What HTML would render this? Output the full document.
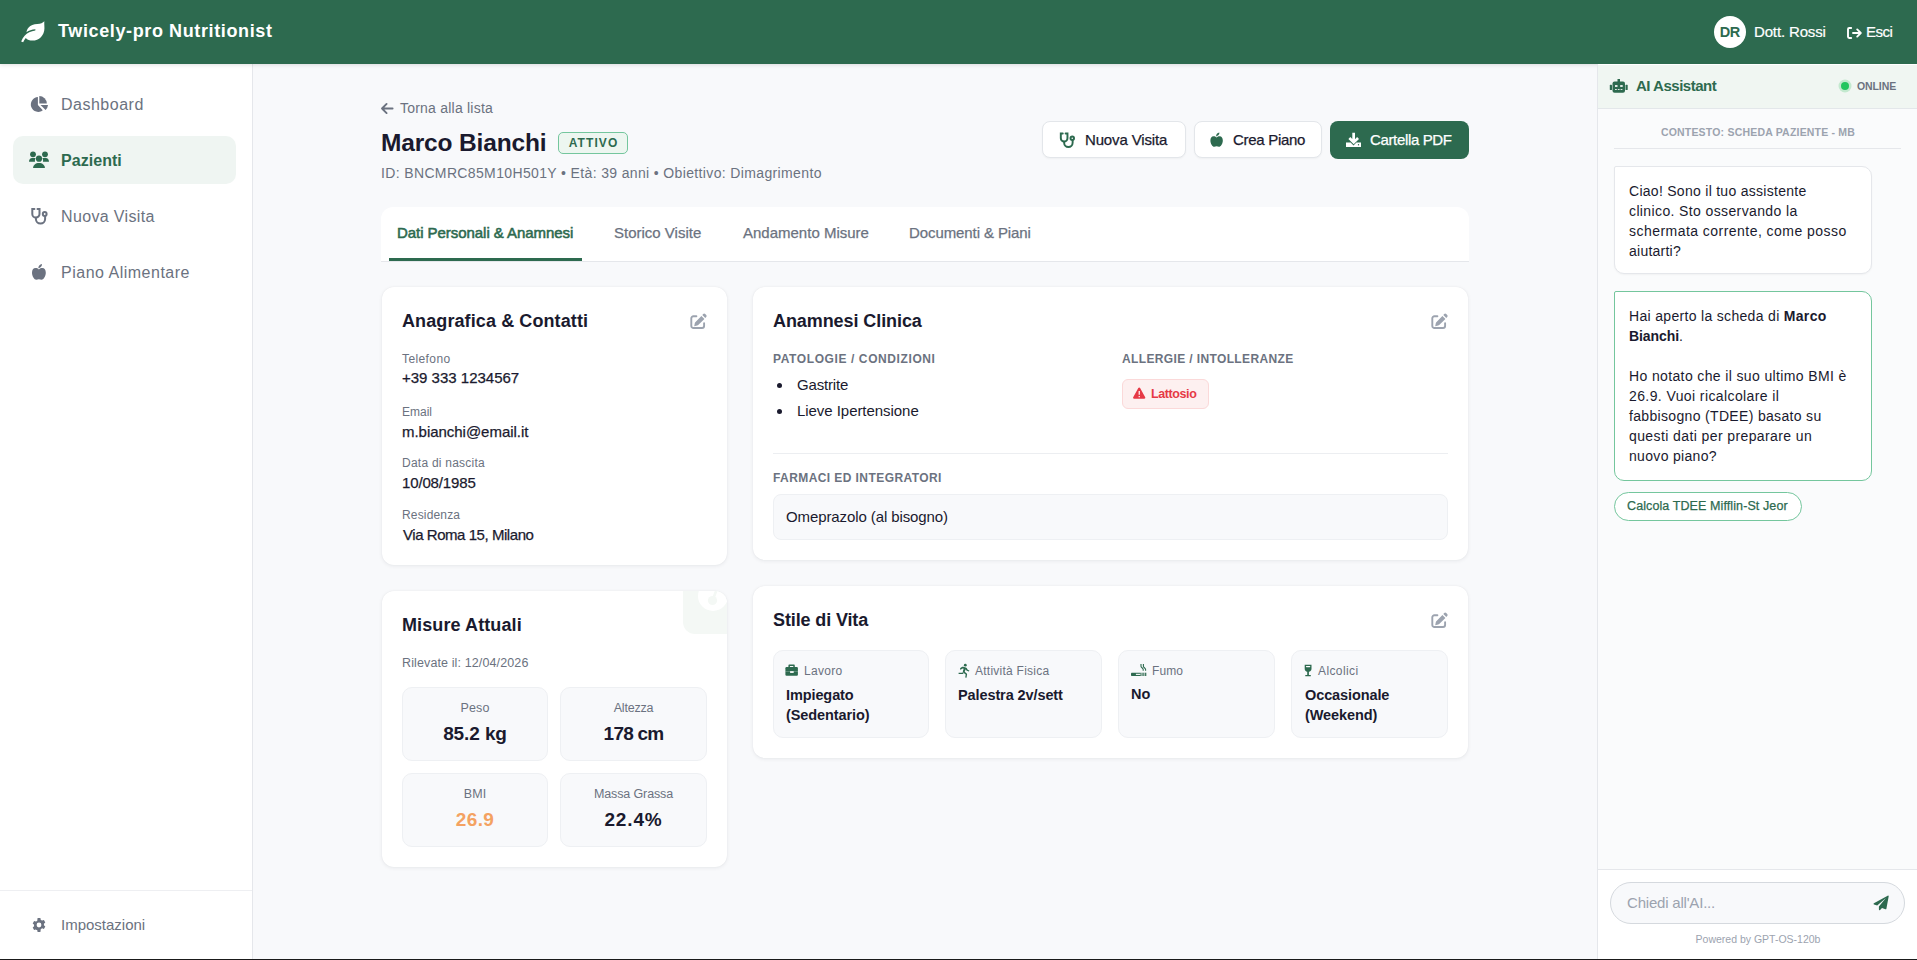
<!DOCTYPE html>
<html><head><meta charset="utf-8">
<style>
*{box-sizing:border-box;margin:0;padding:0}
html,body{width:1917px;height:960px;overflow:hidden}
body{font-family:"Liberation Sans",sans-serif;background:#f8f9fb;color:#1a1a2e;position:relative}
.a{position:absolute;white-space:nowrap;line-height:1}
svg.a{display:block;overflow:visible}
.med{-webkit-text-stroke:.25px currentColor}
.card{position:absolute;background:#fff;border-radius:12px;box-shadow:0 1px 4px rgba(16,24,40,.07),0 0 1.5px rgba(16,24,40,.06)}
.ct{font-size:18px;font-weight:bold;color:#1a1a2e}
.lab{font-size:12px;color:#6b7280}
.val{font-size:15px;color:#1a1a2e}
.sec{font-size:12px;font-weight:bold;color:#6b7280;letter-spacing:.6px}
.tile{position:absolute;background:#f8f9fb;border:1px solid #eef0f3;border-radius:10px}
.btn{position:absolute;border-radius:8px;height:37px}
.nl{font-size:16px;color:#6b7280;letter-spacing:.5px}
</style></head>
<body>
<!-- ============ HEADER ============ -->
<div class="a" style="left:0;top:0;width:1917px;height:64px;background:#2d6a4f;box-shadow:0 1px 4px rgba(0,0,0,.12);z-index:5">
  <svg class="a" style="left:19px;top:20px" width="27" height="25" viewBox="0 0 26 24"><path fill="#fff" d="M24.4 1.2c-1.4 1.6-3.6 2.6-6.7 2.6-3.6 0-6.6 1.2-8.4 3.3C8.1 8.5 7.4 10 7.2 11.7c2.2-1.6 5.1-2.6 8.6-2.8l-.1 1.1c-4.3.6-7.8 2.4-10.3 5.1-1.3 1.5-2.4 3.3-3.3 5.5l1.9.8c.7-1.6 1.5-3 2.5-4.2 1.5 1.7 3.8 2.6 6.4 2.6 6.3 0 11.6-5.1 11.6-12 0-2.4-.3-4.4-.1-6.6z"/></svg>
  <div class="a" style="left:58px;top:22px;font-size:18px;font-weight:bold;color:#fff;letter-spacing:.62px">Twicely-pro Nutritionist</div>
  <div class="a" style="left:1714px;top:16px;width:32px;height:32px;border-radius:50%;background:#fff"></div>
  <div class="a" style="left:1714px;top:25px;width:32px;text-align:center;font-size:14.5px;font-weight:bold;color:#2d6a4f;letter-spacing:-.6px;text-indent:-.6px">DR</div>
  <div class="a" style="left:1754px;top:24px;font-size:15px;color:#fff;letter-spacing:-.15px;-webkit-text-stroke:.2px #fff">Dott. Rossi</div>
  <svg class="a" style="left:1847px;top:27px" width="15" height="12" viewBox="0 0 15 12"><path fill="none" stroke="#fff" stroke-width="1.9" stroke-linecap="round" stroke-linejoin="round" d="M4.2 1H2.2A1.2 1.2 0 0 0 1 2.2v7.6A1.2 1.2 0 0 0 2.2 11h2M6 6h7.6M10.2 2.4L13.8 6l-3.6 3.6"/></svg>
  <div class="a" style="left:1866px;top:24px;font-size:15px;color:#fff;letter-spacing:-.5px;-webkit-text-stroke:.2px #fff">Esci</div>
</div>

<!-- ============ SIDEBAR ============ -->
<div class="a" style="left:0;top:64px;width:253px;height:896px;background:#fff;border-right:1px solid #e5e7eb"></div>
<svg class="a" style="left:26px;top:92px" width="26" height="26" viewBox="0 0 26 26"><g fill="#6b7280"><path d="M11.9 5.1A7.4 7.4 0 1 0 16.8 18.3L11.9 13z"/><path d="M13.3 4v7.4h7.5A7.5 7.5 0 0 0 13.3 4z"/><path d="M14.5 13h7.5a7.5 7.5 0 0 1-2.4 4.9z"/></g></svg>
<div class="a" style="left:13px;top:136px;width:223px;height:48px;border-radius:10px;background:#eff5f2"></div>
<svg class="a" style="left:26px;top:148px" width="26" height="24" viewBox="0 0 26 24"><g fill="#2d6a4f"><circle cx="7" cy="6.3" r="2.9"/><circle cx="19" cy="6.3" r="2.9"/><circle cx="13" cy="10.7" r="3.1"/><path d="M3 13.7c0-2.1 1.3-3.7 3.2-3.7h2.2c.4 0 .8.1 1.2.2a4.6 4.6 0 0 0-.6 3.6z"/><path d="M23 13.7c0-2.1-1.3-3.7-3.2-3.7h-2.2c-.4 0-.8.1-1.2.2a4.6 4.6 0 0 1 .6 3.6z"/><path d="M7.1 20c0-2.9 2.4-5 5.9-5s5.9 2.1 5.9 5z"/></g></svg>
<div class="a nl" style="left:61px;top:97px">Dashboard</div>
<div class="a" style="left:61px;top:153px;font-size:16px;font-weight:bold;color:#2d6a4f;letter-spacing:.05px">Pazienti</div>
<svg class="a" style="left:26px;top:204px" width="26" height="26" viewBox="0 0 26 26"><g fill="none" stroke="#6b7280" stroke-width="2" stroke-linecap="round"><path d="M8.4 4.9H6.3V10a3.6 3.6 0 0 0 7.2 0V4.9h-2"/><path d="M9.9 13.8v1.2a4.6 4.6 0 0 0 9.2 0v-2.8"/><circle cx="18.7" cy="10" r="1.9"/></g></svg>
<div class="a nl" style="left:61px;top:209px;letter-spacing:.35px">Nuova Visita</div>
<svg class="a" style="left:26px;top:260px" width="26" height="26" viewBox="0 0 26 26"><g fill="#6b7280"><path d="M12.9 9.4C11.9 8.5 10.9 8.1 9.5 8.1 7.3 8.1 6 10 6 12.8c0 3.6 2.3 7 4.3 7 .9 0 1.6-.5 2.6-.5s1.7.5 2.6.5c2 0 4.3-3.4 4.3-7 0-2.8-1.3-4.7-3.5-4.7-1.4 0-2.4.4-3.4 1.3z"/><path d="M12.3 8.2c0-2.1 1.3-3.8 3.7-4.2.1 2.2-1.4 3.9-3.7 4.2z"/></g></svg>
<div class="a nl" style="left:61px;top:265px">Piano Alimentare</div>
<div class="a" style="left:0;top:890px;width:252px;height:1px;background:#eeeff2"></div>
<svg class="a" style="left:31px;top:917px" width="16" height="16" viewBox="0 0 16 16"><path fill="#6b7280" fill-rule="evenodd" d="M6.6 1h2.8l.4 1.9c.5.2.9.4 1.3.7l1.8-.6 1.4 2.4-1.4 1.3c.1.5.1 1 0 1.5l1.4 1.3-1.4 2.4-1.8-.6c-.4.3-.8.5-1.3.7L9.4 15H6.6l-.4-1.9c-.5-.2-.9-.4-1.3-.7l-1.8.6-1.4-2.4L3.1 9.3c-.1-.5-.1-1 0-1.5L1.7 6.4l1.4-2.4 1.8.6c.4-.3.8-.5 1.3-.7zM8 5.6A2.4 2.4 0 1 0 8 10.4 2.4 2.4 0 1 0 8 5.6z"/></svg>
<div class="a" style="left:61px;top:917px;font-size:15px;color:#6b7280">Impostazioni</div>

<!-- ============ PAGE HEADER ============ -->
<svg class="a" style="left:380px;top:102px" width="14" height="13" viewBox="0 0 14 13"><path fill="none" stroke="#6b7280" stroke-width="1.9" stroke-linecap="round" stroke-linejoin="round" d="M12.6 6.5H2M6.6 1.9L2 6.5l4.6 4.6"/></svg>
<div class="a" style="left:400px;top:101px;font-size:14px;color:#6b7280;letter-spacing:.22px">Torna alla lista</div>
<div class="a" style="left:381px;top:131px;font-size:24.5px;font-weight:bold;color:#1a1a2e;letter-spacing:-.15px">Marco Bianchi</div>
<div class="a" style="left:558px;top:132px;width:70px;height:22px;border:1.5px solid #74c69d;background:#edf6f0;border-radius:5px"></div>
<div class="a" style="left:558px;top:137px;width:70px;text-align:center;font-size:12px;font-weight:bold;color:#2d6a4f;letter-spacing:1.1px;text-indent:1px">ATTIVO</div>
<div class="a" style="left:381px;top:166px;font-size:14px;color:#6b7280;letter-spacing:.36px">ID: BNCMRC85M10H501Y • Età: 39 anni • Obiettivo: Dimagrimento</div>

<div class="btn" style="left:1042px;top:121px;width:144px;background:#fff;border:1px solid #e3e6ea;box-shadow:0 1px 2px rgba(0,0,0,.04)"></div>
<div class="btn" style="left:1194px;top:121px;width:128px;background:#fff;border:1px solid #e3e6ea;box-shadow:0 1px 2px rgba(0,0,0,.04)"></div>
<div class="btn" style="left:1330px;top:121px;width:139px;height:38px;background:#2d6a4f"></div>
<svg class="a" style="left:1055px;top:129px" width="24" height="24" viewBox="0 0 26 26"><g fill="none" stroke="#2d6a4f" stroke-width="2.1" stroke-linecap="round"><path d="M8.4 4.9H6.3V10a3.6 3.6 0 0 0 7.2 0V4.9h-2"/><path d="M9.9 13.8v1.2a4.6 4.6 0 0 0 9.2 0v-2.8"/><circle cx="18.7" cy="10" r="1.9"/></g></svg>
<div class="a med" style="left:1085px;top:132px;font-size:15px;color:#1a1a2e;letter-spacing:-.15px">Nuova Visita</div>
<svg class="a" style="left:1205px;top:129px" width="23.4" height="23.4" viewBox="0 0 26 26"><g fill="#2d6a4f"><path d="M12.9 9.4C11.9 8.5 10.9 8.1 9.5 8.1 7.3 8.1 6 10 6 12.8c0 3.6 2.3 7 4.3 7 .9 0 1.6-.5 2.6-.5s1.7.5 2.6.5c2 0 4.3-3.4 4.3-7 0-2.8-1.3-4.7-3.5-4.7-1.4 0-2.4.4-3.4 1.3z"/><path d="M12.3 8.2c0-2.1 1.3-3.8 3.7-4.2.1 2.2-1.4 3.9-3.7 4.2z"/></g></svg>
<div class="a med" style="left:1233px;top:132px;font-size:15px;color:#1a1a2e;letter-spacing:-.3px">Crea Piano</div>
<svg class="a" style="left:1340px;top:128px" width="26" height="24" viewBox="0 0 26 24"><g fill="#fff"><path d="M12.3 4.8h2.7v6.4l2.1-2.1 1.9 1.9-5.3 5.3-5.3-5.3 1.9-1.9 2 2z"/><path d="M6 14.6h4.6l2.9 2.9 2.9-2.9H21v4.4H6z"/></g><circle cx="18.5" cy="16.8" r=".7" fill="#2d6a4f"/></svg>
<div class="a med" style="left:1370px;top:132px;font-size:15px;color:#fff;letter-spacing:-.35px">Cartella PDF</div>

<!-- ============ TABS ============ -->
<div class="a" style="left:381px;top:207px;width:1088px;height:55px;background:#fff;border-radius:12px 12px 0 0;border-bottom:1px solid #e5e7eb"></div>
<div class="a" style="left:397px;top:225px;font-size:15px;color:#2d6a4f;letter-spacing:-.05px;-webkit-text-stroke:.55px #2d6a4f">Dati Personali &amp; Anamnesi</div>
<div class="a" style="left:389px;top:258px;width:193px;height:3px;background:#2d6a4f"></div>
<div class="a med" style="left:614px;top:225px;font-size:15px;color:#6b7280">Storico Visite</div>
<div class="a med" style="left:743px;top:225px;font-size:15px;color:#6b7280">Andamento Misure</div>
<div class="a med" style="left:909px;top:225px;font-size:15px;color:#6b7280;letter-spacing:-.09px">Documenti &amp; Piani</div>

<!-- ============ CARD ANAGRAFICA ============ -->
<div class="card" style="left:382px;top:287px;width:345px;height:278px"></div>
<div class="a ct" style="left:402px;top:312px;letter-spacing:.1px">Anagrafica &amp; Contatti</div>
<svg class="a" style="left:690px;top:313px" width="18" height="17" viewBox="0 0 18 17"><g fill="#9ca3af"><path d="M13.2 1.1a1.4 1.4 0 0 1 2 0l1 1a1.4 1.4 0 0 1 0 2l-.9.9-3-3z"/><path d="M11.4 2.9l3 3-6.2 6.2c-.3.3-.6.4-1 .5l-3 .6.6-3c.1-.4.2-.7.5-1z"/></g><path fill="none" stroke="#9ca3af" stroke-width="1.9" stroke-linecap="round" d="M6.4 3.2H3.4A2.1 2.1 0 0 0 1.3 5.3v7.6A2.1 2.1 0 0 0 3.4 15h8.6a2.1 2.1 0 0 0 2.1-2.1v-2.6"/></svg>
<div class="a lab" style="left:402px;top:353px;letter-spacing:.4px">Telefono</div>
<div class="a val med" style="left:402px;top:370px;letter-spacing:0">+39 333 1234567</div>
<div class="a lab" style="left:402px;top:406px;letter-spacing:0">Email</div>
<div class="a val med" style="left:402px;top:424px;letter-spacing:-.03px">m.bianchi@email.it</div>
<div class="a lab" style="left:402px;top:457px;letter-spacing:.24px">Data di nascita</div>
<div class="a val med" style="left:402px;top:475px;letter-spacing:-.15px">10/08/1985</div>
<div class="a lab" style="left:402px;top:509px;letter-spacing:.16px">Residenza</div>
<div class="a val med" style="left:403px;top:527px;letter-spacing:-.45px">Via Roma 15, Milano</div>

<!-- ============ CARD MISURE ============ -->
<div class="card" style="left:382px;top:591px;width:345px;height:276px;overflow:hidden">
  <div class="a" style="left:301px;top:-1px;width:45px;height:44px;background:#f4f8f5;border-radius:0 0 0 12px"></div>
  <div class="a" style="left:316px;top:-10px;width:30px;height:30px;border-radius:50%;background:#fff"></div>
  <svg class="a" style="left:316px;top:-10px" width="30" height="30" viewBox="0 0 30 30"><circle cx="14.5" cy="19.5" r="4.6" fill="#f4f8f5"/><path d="M15.5 17l3-8" stroke="#f4f8f5" stroke-width="2.6" stroke-linecap="round"/></svg>
</div>
<div class="a ct" style="left:402px;top:616px;letter-spacing:.1px">Misure Attuali</div>
<div class="a" style="left:402px;top:657px;font-size:12.5px;color:#6b7280;letter-spacing:.12px">Rilevate il: 12/04/2026</div>
<div class="tile" style="left:402px;top:687px;width:146px;height:74px"></div>
<div class="tile" style="left:560px;top:687px;width:147px;height:74px"></div>
<div class="tile" style="left:402px;top:773px;width:146px;height:74px"></div>
<div class="tile" style="left:560px;top:773px;width:147px;height:74px"></div>
<div class="a lab" style="left:402px;top:702px;width:146px;text-align:center;font-size:12.5px;letter-spacing:.1px">Peso</div>
<div class="a" style="left:402px;top:724px;width:146px;text-align:center;font-size:19px;font-weight:bold;color:#1a1a2e;letter-spacing:-.1px">85.2 kg</div>
<div class="a lab" style="left:560px;top:702px;width:147px;text-align:center;font-size:12.5px;letter-spacing:-.2px">Altezza</div>
<div class="a" style="left:560px;top:724px;width:147px;text-align:center;font-size:19px;font-weight:bold;color:#1a1a2e;letter-spacing:-.78px">178 cm</div>
<div class="a lab" style="left:402px;top:788px;width:146px;text-align:center;font-size:12.5px;letter-spacing:.1px">BMI</div>
<div class="a" style="left:402px;top:810px;width:146px;text-align:center;font-size:19px;font-weight:bold;color:#f4a261;letter-spacing:.4px">26.9</div>
<div class="a lab" style="left:560px;top:788px;width:147px;text-align:center;font-size:12.5px;letter-spacing:-.12px">Massa Grassa</div>
<div class="a" style="left:560px;top:810px;width:147px;text-align:center;font-size:19px;font-weight:bold;color:#1a1a2e;letter-spacing:.85px">22.4%</div>

<!-- ============ CARD ANAMNESI ============ -->
<div class="card" style="left:753px;top:287px;width:715px;height:273px"></div>
<div class="a ct" style="left:773px;top:312px;letter-spacing:-.08px">Anamnesi Clinica</div>
<svg class="a" style="left:1431px;top:313px" width="18" height="17" viewBox="0 0 18 17"><g fill="#9ca3af"><path d="M13.2 1.1a1.4 1.4 0 0 1 2 0l1 1a1.4 1.4 0 0 1 0 2l-.9.9-3-3z"/><path d="M11.4 2.9l3 3-6.2 6.2c-.3.3-.6.4-1 .5l-3 .6.6-3c.1-.4.2-.7.5-1z"/></g><path fill="none" stroke="#9ca3af" stroke-width="1.9" stroke-linecap="round" d="M6.4 3.2H3.4A2.1 2.1 0 0 0 1.3 5.3v7.6A2.1 2.1 0 0 0 3.4 15h8.6a2.1 2.1 0 0 0 2.1-2.1v-2.6"/></svg>
<div class="a sec" style="left:773px;top:353px">PATOLOGIE / CONDIZIONI</div>
<div class="a" style="left:777px;top:383px;width:5px;height:5px;border-radius:50%;background:#1a1a2e"></div>
<div class="a val" style="left:797px;top:377px;letter-spacing:-.18px">Gastrite</div>
<div class="a" style="left:777px;top:409px;width:5px;height:5px;border-radius:50%;background:#1a1a2e"></div>
<div class="a val" style="left:797px;top:403px;letter-spacing:-.05px">Lieve Ipertensione</div>
<div class="a sec" style="left:1122px;top:353px;letter-spacing:.37px">ALLERGIE / INTOLLERANZE</div>
<div class="a" style="left:1122px;top:379px;width:87px;height:30px;background:#fdf0f0;border:1px solid #fbd9d9;border-radius:6px"></div>
<svg class="a" style="left:1128px;top:383px" width="22" height="20" viewBox="0 0 22 20"><path fill="#e63946" fill-rule="evenodd" d="M11.2 4.6c.4 0 .7.2.9.5l5.1 9.2c.4.7-.1 1.5-.9 1.5H6.1c-.8 0-1.3-.8-.9-1.5l5.1-9.2c.2-.3.5-.5.9-.5zM10.6 8.1v3.7h1.3V8.1zm0 4.8v1.4h1.3v-1.4z"/></svg>
<div class="a" style="left:1151px;top:388px;font-size:12.5px;font-weight:bold;color:#e63946;letter-spacing:-.4px">Lattosio</div>
<div class="a" style="left:773px;top:453px;width:675px;height:1px;background:#eceef1"></div>
<div class="a sec" style="left:773px;top:472px;letter-spacing:.42px">FARMACI ED INTEGRATORI</div>
<div class="a" style="left:773px;top:494px;width:675px;height:46px;background:#f8f9fb;border:1px solid #eef0f3;border-radius:8px"></div>
<div class="a val" style="left:786px;top:509px;letter-spacing:-.1px">Omeprazolo (al bisogno)</div>

<!-- ============ CARD STILE ============ -->
<div class="card" style="left:753px;top:586px;width:715px;height:172px"></div>
<div class="a ct" style="left:773px;top:611px;letter-spacing:-.12px">Stile di Vita</div>
<svg class="a" style="left:1431px;top:612px" width="18" height="17" viewBox="0 0 18 17"><g fill="#9ca3af"><path d="M13.2 1.1a1.4 1.4 0 0 1 2 0l1 1a1.4 1.4 0 0 1 0 2l-.9.9-3-3z"/><path d="M11.4 2.9l3 3-6.2 6.2c-.3.3-.6.4-1 .5l-3 .6.6-3c.1-.4.2-.7.5-1z"/></g><path fill="none" stroke="#9ca3af" stroke-width="1.9" stroke-linecap="round" d="M6.4 3.2H3.4A2.1 2.1 0 0 0 1.3 5.3v7.6A2.1 2.1 0 0 0 3.4 15h8.6a2.1 2.1 0 0 0 2.1-2.1v-2.6"/></svg>
<div class="tile" style="left:773px;top:650px;width:156px;height:88px"></div>
<div class="tile" style="left:945px;top:650px;width:157px;height:88px"></div>
<div class="tile" style="left:1118px;top:650px;width:157px;height:88px"></div>
<div class="tile" style="left:1291px;top:650px;width:157px;height:88px"></div>
<svg class="a" style="left:780px;top:660px" width="24" height="20" viewBox="0 0 24 20"><g fill="#2d6a4f"><path d="M8.4 7.2V5.7c0-.6.4-1.1 1-1.1h4.4c.6 0 1 .5 1 1.1v1.5h-1.5V6.1H9.9v1.1z"/><rect x="5.4" y="7.1" width="12.5" height="8.7" rx="1.1"/></g><rect x="5.4" y="11" width="12.5" height=".5" fill="#fff" opacity=".45"/><rect x="10.1" y="11.2" width="3.6" height="1.7" fill="#fff"/></svg>
<div class="a lab" style="left:804px;top:665px;letter-spacing:.3px">Lavoro</div>
<div class="a val" style="left:786px;top:685px;font-weight:bold;font-size:14.5px;line-height:20px;letter-spacing:-.1px">Impiegato<br>(Sedentario)</div>
<svg class="a" style="left:954px;top:660px" width="20" height="20" viewBox="0 0 20 20"><g fill="#2d6a4f"><circle cx="11.3" cy="5.2" r="1.4"/><path d="M6 8.2l1.8-1.1c.5-.3 1-.4 1.5-.3l2.5.6c.4.1.7.3.9.7l1 1.6 1.7.8-.5 1.1-2.1-.9c-.2-.1-.4-.3-.5-.5l-.6-1-1 2.6 2 1.6c.3.2.4.5.4.8l-.6 3.6-1.3-.2.5-3.2-2.3-1.7c-.5-.4-.7-1-.5-1.6l.8-2.3-1.1-.2L7.3 9.2l-.6 1z"/><path d="M8.7 12.2l.9 1c-.2.4-.5.7-.9.8H4.6v-1.3h3.6z"/></g></svg>
<div class="a lab" style="left:975px;top:665px;letter-spacing:.25px">Attività Fisica</div>
<div class="a val" style="left:958px;top:688px;font-weight:bold;font-size:14.5px;letter-spacing:-.1px">Palestra 2v/sett</div>
<svg class="a" style="left:1126px;top:660px" width="24" height="20" viewBox="0 0 24 20"><g fill="#2d6a4f"><path d="M5 13.4c0-.4.3-.7.7-.7h9.1v3.3H5.7c-.4 0-.7-.3-.7-.7z"/><rect x="15.5" y="12.7" width="1.1" height="3.3"/><rect x="17.3" y="12.7" width="1.1" height="3.3"/><rect x="19.1" y="12.7" width="1.2" height="3.3"/></g><rect x="9.9" y="13.8" width="4.5" height="1.1" fill="#fff"/><path fill="none" stroke="#2d6a4f" stroke-width="1.1" d="M15 4v2.2c0 1.3 2.2 1.8 2.2 3.3v1.3M17.4 4v2.2c0 1.3 2.2 1.8 2.2 3.3v1.3"/></svg>
<div class="a lab" style="left:1152px;top:665px;letter-spacing:.1px">Fumo</div>
<div class="a val" style="left:1131px;top:687px;font-weight:bold;font-size:14.5px">No</div>
<svg class="a" style="left:1298px;top:660px" width="20" height="20" viewBox="0 0 20 20"><g fill="#2d6a4f"><path d="M6.7 4.8h6.8v3.9c0 1.6-1.1 2.9-2.6 3.1v3.3h1.9v1.2H7.3v-1.2h1.9v-3.3C7.8 11.6 6.7 10.3 6.7 8.7z"/></g><rect x="7.9" y="6" width="4.4" height="1.2" rx=".6" fill="#fff"/></svg>
<div class="a lab" style="left:1318px;top:665px;letter-spacing:.4px">Alcolici</div>
<div class="a val" style="left:1305px;top:685px;font-weight:bold;font-size:14.5px;line-height:20px;letter-spacing:-.1px">Occasionale<br>(Weekend)</div>

<!-- ============ AI PANEL ============ -->
<div style="position:absolute;left:0;top:0;z-index:6">
<div class="a" style="left:1597px;top:64px;width:320px;height:896px;background:#fafbfc;border-left:1px solid #e5e7eb"></div>
<div class="a" style="left:1598px;top:64px;width:319px;height:45px;background:#f0f6f2;border-top:1px solid #fff;border-bottom:1px solid #e3e7ea"></div>
<svg class="a" style="left:1605px;top:74px" width="28" height="24" viewBox="0 0 28 24"><g fill="#2d6a4f"><rect x="7.5" y="7.5" width="12.5" height="11.3" rx="2"/><rect x="12.5" y="5" width="2.5" height="3"/><rect x="4.8" y="10.8" width="2.2" height="5.2" rx=".6"/><rect x="20.5" y="10.8" width="2.2" height="5.2" rx=".6"/></g><g fill="#fff" opacity=".85"><rect x="10" y="11" width="2.5" height="2"/><rect x="15.2" y="11" width="2.5" height="2"/><rect x="10" y="15" width="1.8" height="1"/><rect x="12.8" y="15" width="1.8" height="1"/><rect x="15.6" y="15" width="1.8" height="1"/></g></svg>
<div class="a" style="left:1636px;top:78px;font-size:15px;font-weight:bold;color:#2d6a4f;letter-spacing:-.5px">AI Assistant</div>
<div class="a" style="left:1841px;top:82px;width:8px;height:8px;border-radius:50%;background:#22c55e;box-shadow:0 0 0 2.5px #c3e9cf"></div>
<div class="a" style="left:1857px;top:81px;font-size:10.5px;font-weight:bold;color:#6b7280;letter-spacing:-.1px">ONLINE</div>
<div class="a" style="left:1598px;top:127px;width:320px;text-align:center;font-size:10.5px;font-weight:bold;color:#9ca3af;letter-spacing:.2px">CONTESTO: SCHEDA PAZIENTE - MB</div>
<div class="a" style="left:1614px;top:148px;width:287px;height:1px;background:#e5e7eb"></div>
<div class="a" style="left:1614px;top:166px;width:258px;height:108px;background:#fff;border:1px solid #e5e7eb;border-radius:2px 10px 10px 10px;box-shadow:0 1px 2px rgba(0,0,0,.04)"></div>
<div class="a" style="left:1629px;top:181px;font-size:14px;line-height:20px;color:#1a1a2e"><div style="letter-spacing:.28px">Ciao! Sono il tuo assistente</div><div style="letter-spacing:.38px">clinico. Sto osservando la</div><div style="letter-spacing:.46px">schermata corrente, come posso</div><div style="letter-spacing:.24px">aiutarti?</div></div>
<div class="a" style="left:1614px;top:291px;width:258px;height:190px;background:#fff;border:1px solid #74c69d;border-radius:2px 10px 10px 10px"></div>
<div class="a" style="left:1629px;top:306px;font-size:14px;line-height:20px;color:#1a1a2e"><div style="letter-spacing:.32px">Hai aperto la scheda di <b>Marco</b></div><div style="letter-spacing:.4px"><b style="letter-spacing:-.08px">Bianchi</b>.</div><div>&nbsp;</div><div style="letter-spacing:.37px">Ho notato che il suo ultimo BMI è</div><div style="letter-spacing:.4px">26.9. Vuoi ricalcolare il</div><div style="letter-spacing:.33px">fabbisogno (TDEE) basato su</div><div style="letter-spacing:.4px">questi dati per preparare un</div><div style="letter-spacing:.32px">nuovo piano?</div></div>
<div class="a" style="left:1614px;top:492px;width:188px;height:29px;border:1px solid #74c69d;border-radius:15px;background:#fff"></div>
<div class="a med" style="left:1627px;top:500px;font-size:12.5px;color:#2d6a4f;letter-spacing:.1px">Calcola TDEE Mifflin-St Jeor</div>
<div class="a" style="left:1598px;top:869px;width:319px;height:91px;background:#fff;border-top:1px solid #e5e7eb"></div>
<div class="a" style="left:1610px;top:882px;width:295px;height:42px;border:1px solid #d5d9de;border-radius:21px;background:#f8f9fb"></div>
<div class="a" style="left:1627px;top:895px;font-size:15px;color:#9ca3af;letter-spacing:-.2px">Chiedi all'AI...</div>
<svg class="a" style="left:1868px;top:890px" width="26" height="24" viewBox="0 0 26 24"><g fill="#2d6a4f"><path d="M19.7 5.8L5.9 13.2c-.5.3-.4 1 .1 1.2l3.2 1.2 8.7-7.5-7 8.3v3.1c0 .6.7.9 1.2.5l1.9-2 3.4 1.3c.4.2.9-.1 1-.5l2.3-12.6c.1-.5-.4-.8-1-.5z"/></g></svg>
<div class="a" style="left:1598px;top:934px;width:320px;text-align:center;font-size:10.5px;color:#9ca3af">Powered by GPT-OS-120b</div>

</div>
<div class="a" style="left:0;top:959px;width:1917px;height:1px;background:#1a1a1a;z-index:10"></div>
</body></html>
